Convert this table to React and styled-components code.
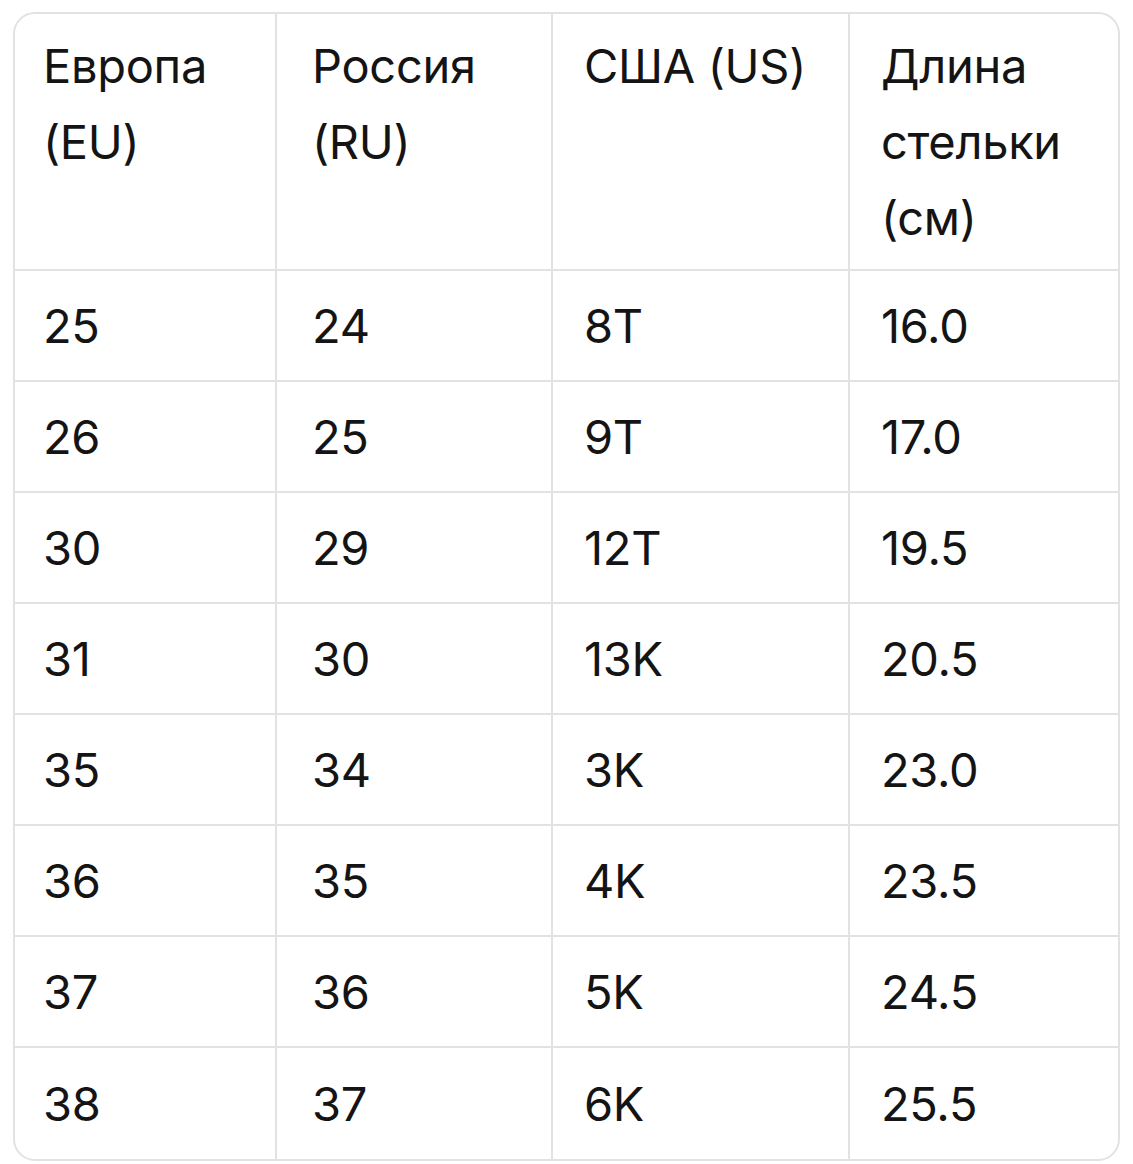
import styled, { createGlobalStyle } from "styled-components";

const GlobalStyle = createGlobalStyle`
  body {
    margin: 0;
    background: #ffffff;
    font-family: Inter, "Noto Sans", "Liberation Sans", sans-serif;
    color: #141414;
  }
`;

const Page = styled.div`
  padding: 12px 13px 0 13px;
`;

const Table = styled.div`
  width: 1107px;
  box-sizing: border-box;
  display: grid;
  grid-template-columns: 262px 276px 297px 1fr;
  border: 2px solid #e2e2e2;
  border-radius: 22px;
  overflow: hidden;
`;

const Cell = styled.div`
  box-sizing: border-box;
  height: ${(p) => (p.$head ? "257px" : "111px")};
  padding: ${(p) => (p.$head ? "14px 20px 0 0" : "0 20px 0 0")};
  padding-left: ${(p) => (p.$col === 1 ? "35px" : p.$col === 0 ? "28px" : "31px")};
  display: flex;
  align-items: ${(p) => (p.$head ? "flex-start" : "center")};
  font-size: 47px;
  line-height: 76px;
  letter-spacing: -0.3px;
  border-right: ${(p) => (p.$col === 3 ? "none" : "2px solid #e2e2e2")};
  border-bottom: ${(p) => (p.$last ? "none" : "2px solid #e2e2e2")};
`;

const headers = [
  ["Европа", "(EU)"],
  ["Россия", "(RU)"],
  ["США (US)"],
  ["Длина", "стельки", "(см)"],
];

const rows = [
  ["25", "24", "8T", "16.0"],
  ["26", "25", "9T", "17.0"],
  ["30", "29", "12T", "19.5"],
  ["31", "30", "13K", "20.5"],
  ["35", "34", "3K", "23.0"],
  ["36", "35", "4K", "23.5"],
  ["37", "36", "5K", "24.5"],
  ["38", "37", "6K", "25.5"],
];

export default function App() {
  return (
    <>
      <GlobalStyle />
      <Page>
        <Table>
          {headers.map((lines, i) => (
            <Cell key={"h" + i} $head $col={i}>
              <div>
                {lines.map((l) => (
                  <div key={l}>{l}</div>
                ))}
              </div>
            </Cell>
          ))}
          {rows.map((row, r) =>
            row.map((v, i) => (
              <Cell key={r + "-" + i} $col={i} $last={r === rows.length - 1}>
                {v}
              </Cell>
            ))
          )}
        </Table>
      </Page>
    </>
  );
}
